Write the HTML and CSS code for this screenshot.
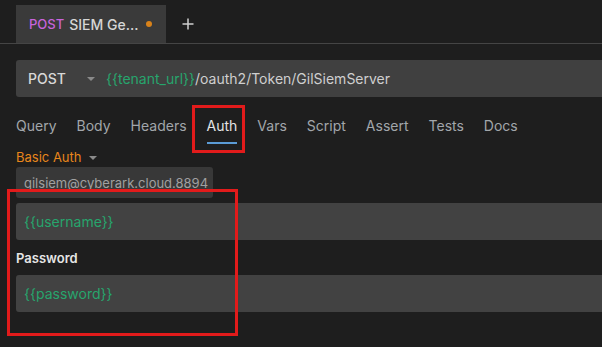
FILE: index.html
```html
<!DOCTYPE html>
<html lang="en">
<head>
    <meta charset="UTF-8">
    <title>SIEM Request - Auth</title>
    <link rel="stylesheet" href="styles.css">
</head>
<body>
    <div class="tabbar">
        <div class="req-tab">
            <span class="method">POST</span>
            <span class="req-name">SIEM Ge...</span>
            <span class="dirty-dot"></span>
        </div>
        <button class="new-tab" aria-label="New tab">
            <svg width="12" height="12" viewBox="0 0 12 12"><path d="M6 0.5V11.5M0.5 6H11.5" stroke="#cfcfcf" stroke-width="1.5" fill="none"/></svg>
        </button>
    </div>

    <div class="url-bar">
        <span class="url-method">POST</span>
        <span class="caret"></span>
        <span class="url-text"><span class="var">{{tenant_url}}</span>/oauth2/Token/GilSiemServer</span>
    </div>

    <nav class="pane-tabs">
        <span class="pane-tab">Query</span>
        <span class="pane-tab">Body</span>
        <span class="pane-tab">Headers</span>
        <span class="pane-tab active">Auth</span>
        <span class="pane-tab">Vars</span>
        <span class="pane-tab">Script</span>
        <span class="pane-tab">Assert</span>
        <span class="pane-tab">Tests</span>
        <span class="pane-tab">Docs</span>
    </nav>

    <div class="auth-mode">Basic Auth <span class="caret"></span></div>

    <div class="suggestion">gilsiem@cyberark.cloud.8894</div>
    <div class="field"><span class="var">{{username}}</span></div>
    <div class="field-label">Password</div>
    <div class="field"><span class="var">{{password}}</span></div>

    <div class="highlight hl-auth"></div>
    <div class="highlight hl-fields"></div>
</body>
</html>
```

FILE: styles.css
```css
body {
    margin: 0;
    background: #1e1e1e;
    font-family: Inter, "Noto Sans", sans-serif;
    color: #d4d4d4;
    height: 347px;
    overflow: hidden;
    position: relative;
}

.tabbar {
    display: flex;
    align-items: flex-end;
    padding: 5px 0 0 16px;
    border-bottom: 1px solid #454545;
    height: 38px;
}

.req-tab {
    display: flex;
    align-items: center;
    width: 150px;
    height: 38px;
    box-sizing: border-box;
    padding: 0 13px;
    background: #3a3a3a;
    font-size: 14px;
}

.method {
    color: #c864dc;
    font-weight: 500;
    font-size: 13px;
    margin-right: 5px;
}

.req-name {
    color: #d6d6d6;
    font-weight: 500;
    flex: 1;
}

.dirty-dot {
    width: 6px;
    height: 6px;
    border-radius: 50%;
    background: #d8821a;
    margin-right: 1px;
}

.new-tab {
    background: none;
    border: none;
    padding: 0;
    width: 44px;
    height: 38px;
    display: flex;
    align-items: center;
    justify-content: center;
}

.url-bar {
    display: flex;
    align-items: center;
    margin: 16px 0 0 16px;
    height: 37px;
    background: #404040;
    border-radius: 3px 0 0 3px;
    padding-left: 12px;
    font-size: 14px;
}

.url-method {
    color: #d8d8d8;
    font-weight: 500;
    width: 59px;
}

.caret {
    display: inline-block;
    width: 0;
    height: 0;
    border-left: 4px solid transparent;
    border-right: 4px solid transparent;
    border-top: 4px solid #8a8a8a;
}

.url-bar .caret {
    margin-right: 11px;
}

.url-text {
    color: #cfcfcf;
}

.var {
    color: #27a56d;
}

.pane-tabs {
    display: flex;
    gap: 20px;
    margin: 19px 0 0 16px;
    font-size: 14px;
}

.pane-tab {
    line-height: 20px;
    padding-bottom: 6px;
    color: #a2a6ab;
    border-bottom: 2px solid transparent;
}

.pane-tab.active {
    color: #e4e4e4;
    border-bottom-color: #5b9bd5;
}

.auth-mode {
    margin: 5px 0 0 16px;
    font-size: 13px;
    line-height: 16px;
    color: #e8861b;
}

.auth-mode .caret {
    margin-left: 4px;
    vertical-align: 2px;
}

.suggestion {
    margin: 2px 0 0 16px;
    width: 197px;
    height: 31px;
    box-sizing: border-box;
    padding: 8px 0 0 8px;
    background: #383838;
    border-radius: 3px;
    font-size: 13px;
    color: #a0a0a0;
}

.field {
    margin: 5px 0 0 16px;
    height: 37px;
    display: flex;
    align-items: center;
    padding-left: 8px;
    background: #424242;
    border-radius: 3px 0 0 3px;
    font-size: 14px;
}

.field-label {
    margin: 10px 0 9px 16px;
    font-size: 13px;
    line-height: 16px;
    font-weight: 600;
    color: #e6e6e6;
}

.field-label + .field {
    margin-top: 0;
}

.highlight {
    position: absolute;
    border: 3px solid #e21b1b;
    box-sizing: border-box;
}

.hl-auth {
    left: 192px;
    top: 105px;
    width: 53px;
    height: 48px;
}

.hl-fields {
    left: 7px;
    top: 189px;
    width: 231px;
    height: 147px;
}
```
